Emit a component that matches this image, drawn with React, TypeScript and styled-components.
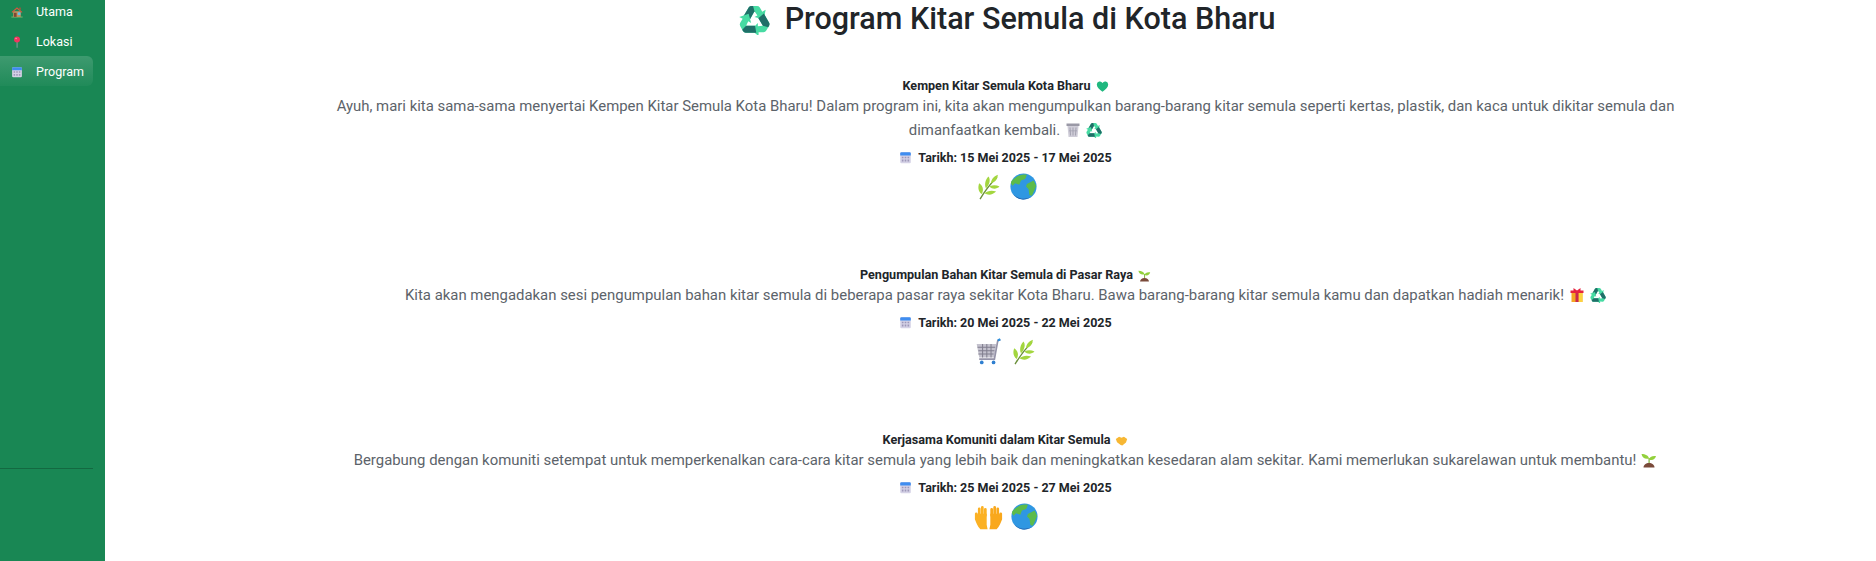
import React from 'react'
import styled, { createGlobalStyle } from 'styled-components'

type IconName =
  | 'house'
  | 'pin'
  | 'calendar'
  | 'recycle'
  | 'heart'
  | 'trash'
  | 'herb'
  | 'globe'
  | 'seedling'
  | 'gift'
  | 'cart'
  | 'handshake'
  | 'hands'

interface IconProps {
  name: IconName
  size: number
}

const RecycleArrow = ({ turn }: { turn: number }) => (
  <g transform={`rotate(${turn} 16 17.500)`}>
    <path
      d="M4.500 13 10 3.500Q11 2 13 2H18.500Q20.500 2 21.500 3.500L24 8 27.500 6 25.500 16 16 13.500 19 11.800 16 7.500 11.500 15.500z"
      fill="#47dba3"
    />
    <path d="M4.500 13 10 3.500Q11 2 13 2H14.500L16 7.500 11.500 15.500z" fill="#1f6f68" />
  </g>
)

const Icon = ({ name, size }: IconProps) => (
  <IconSvg width={size} height={size} viewBox="0 0 32 32">
    {name === 'house' && (
      <>
        <path d="M1 28h30v3H1z" fill="#6fae6a" />
        <path d="M6 14h20v15H6z" fill="#c9905f" />
        <path d="M1.500 16 16 3l14.500 13-2 2L16 7 3.500 18z" fill="#d9563f" />
        <path d="M22 4h4v7l-4-3.500z" fill="#a8533f" />
        <path d="M8 18h7v11H8z" fill="#7d4a34" />
        <path d="M18 17h7v7h-7z" fill="#5ec4ee" />
      </>
    )}
    {name === 'pin' && (
      <>
        <path d="M15 15h2.400v16H15z" fill="#9a9aa8" />
        <circle cx="16" cy="9" r="8" fill="#f0355f" />
        <circle cx="13.500" cy="6.500" r="2" fill="#ff9db4" />
      </>
    )}
    {name === 'calendar' && (
      <>
        <rect x="3" y="3" width="26" height="27" rx="3" fill="#d5d2e6" />
        <path d="M3 11V6a3 3 0 0 1 3-3h20a3 3 0 0 1 3 3v5z" fill="#3f8df0" />
        <path d="M7 14h4v4H7zm7 0h4v4h-4zm7 0h4v4h-4zM7 21h4v5H7zm7 0h4v5h-4zm7 0h4v5h-4z" fill="#9d97b8" />
      </>
    )}
    {name === 'recycle' && (
      <>
        <RecycleArrow turn={0} />
        <RecycleArrow turn={120} />
        <RecycleArrow turn={240} />
      </>
    )}
    {name === 'heart' && (
      <path d="M16 29C8 23 2 17.500 2 11a7.500 7.500 0 0 1 14-3.500A7.500 7.500 0 0 1 30 11c0 6.500-6 12-14 18z" fill="#1fb87f" />
    )}
    {name === 'trash' && (
      <>
        <path d="M3 3h26v5H3z" fill="#9a99a6" />
        <path d="M5 8h22l-2 22H7z" fill="#cfcdd8" />
        <path d="M9 11h2l1 16h-2zm6 0h2v16h-2zm6 0h2l-1 16h-2zM8 17h16v1.500H8z" fill="#a3a1b0" />
      </>
    )}
    {name === 'herb' && (
      <>
        <path d="M6 31C10 24 15 16 26 5" fill="none" stroke="#6a8f3a" strokeWidth="1.600" />
        <path d="M8 25C4 22 3 17 5 12c4 3 6 7 3 13zM13 18C11 14 12 8 16 4c3 4 1 10-3 14zM19 12c0-4 3-8 8-10 0 5-3 9-8 10zM11 24c4-3 9-4 14-2-4 4-9 5-14 2zM17 16c4-2 8-2 12 0-3 3-8 4-12 0z" fill="#a3d63f" />
      </>
    )}
    {name === 'globe' && (
      <>
        <circle cx="16" cy="16" r="15.500" fill="#2f97e2" />
        <path d="M6 6c4-4 10-5 14-4l-2 5-5 2-2 5-5-2-3 3-2-3c0-2 2-4 5-6zM20 13l8-4 3 6-2 5-3 7-3-1-1-7-3-3z" fill="#5cbb4a" />
        <path d="M25 28.500A15.500 15.500 0 0 1 3.500 25a18 18 0 0 0 21.500 3.500z" fill="#24549e" />
      </>
    )}
    {name === 'seedling' && (
      <>
        <path d="M15 12h2.400v12H15z" fill="#7fb23a" />
        <path d="M16 13C15 7 9 4 1 4c1 7 7 11 15 9zM16 15c1-5 6-8 14-7-1 6-7 10-14 7z" fill="#93d13c" />
        <path d="M5 31c0-5 5-9 11-9s11 4 11 9z" fill="#7a4a3a" />
      </>
    )}
    {name === 'gift' && (
      <>
        <path d="M5 10h22v20H5z" fill="#f4a623" />
        <path d="M19 10h8v20h-8z" fill="#fdd23f" />
        <path d="M13 10h6v20h-6z" fill="#c9274f" />
        <path d="M3 7h26v5H3zM9 2l7 5 7-5v5H9z" fill="#e6233f" />
      </>
    )}
    {name === 'cart' && (
      <>
        <path d="M2 7h23l-2 16H5z" fill="#c4c2ce" />
        <path d="M3 11h21M4 15h19M4 19h18M9 7v16M14 7v16M19 7v16" stroke="#807e8e" strokeWidth="1.200" />
        <path d="M30 2l-3 1-4 22H5" fill="none" stroke="#9593a8" strokeWidth="2" />
        <path d="M27 3l3-1.500" stroke="#2f8fdc" strokeWidth="2.500" />
        <circle cx="8" cy="29" r="2.200" fill="#2f7fd0" />
        <circle cx="22" cy="29" r="2.200" fill="#2f7fd0" />
      </>
    )}
    {name === 'handshake' && (
      <path d="M2 12l8-5 6 2 6-2 8 5-3 9-9 7-4-1-9-7z" fill="#f7b733" />
    )}
    {name === 'hands' && (
      <>
        <path d="M2.500 19V13M5.800 15V7.500M9.200 15V6M12.500 15V8" stroke="#fbb124" strokeWidth="3" strokeLinecap="round" />
        <path d="M1 18l3-5h10v12l1 5H7C4 27 2 23 1 18z" fill="#fbb124" />
        <path d="M29.500 19V13M26.200 15V7.500M22.800 15V6M19.500 15V8" stroke="#f9a81c" strokeWidth="3" strokeLinecap="round" />
        <path d="M31 18l-3-5H18v12l-1 5h8c3-3 5-7 6-12z" fill="#f9a81c" />
      </>
    )}
  </IconSvg>
)

const GlobalStyle = createGlobalStyle`
  html,
  body {
    margin: 0;
    background: #fff;
  }

  body {
    font-family: Roboto, 'Noto Sans', sans-serif;
    font-size: 16px;
    color: #212529;
    overflow: hidden;
  }
`

const IconSvg = styled.svg`
  display: inline-block;
  flex: none;
`

const Layout = styled.div`
  display: flex;
  height: 561px;
`

const Sidebar = styled.aside`
  display: flex;
  flex-direction: column;
  width: 105px;
  flex: none;
  background: #198754;
`

const NavList = styled.nav`
  flex: 1;
  display: flex;
  flex-direction: column;
  margin-top: -4px;
  padding-right: 12px;
`

const NavItem = styled.a<{ $active?: boolean }>`
  box-sizing: border-box;
  display: flex;
  align-items: center;
  gap: 13px;
  height: 30px;
  padding: 1px 0 0 11px;
  border-radius: 0 6px 6px 0;
  font-size: 12.500px;
  color: #fff;
  background: ${({ $active }) =>
    $active
      ? 'linear-gradient(180deg, rgba(255,255,255,0.16), rgba(255,255,255,0.03))'
      : 'transparent'};
`

const SidebarFooter = styled.div`
  height: 92px;
  margin-right: 12px;
  border-top: 1px solid rgba(0, 0, 0, 0.22);
`

const Main = styled.main`
  flex: 1;
  min-width: 0;
  padding-left: 30px;
  text-align: center;
`

const Title = styled.h1`
  display: flex;
  align-items: center;
  justify-content: center;
  gap: 15px;
  height: 38px;
  margin: 0 0 40px;
  padding-left: 3px;
  font-size: 30.500px;
  font-weight: 500;
  line-height: 38px;
  color: #212529;
`

const ProgramItem = styled.section`
  padding: 0 168px;
  margin-bottom: 67px;
`

const ProgramTitle = styled.h2`
  display: flex;
  align-items: center;
  justify-content: center;
  gap: 5px;
  margin: 0;
  height: 16px;
  font-size: 12.600px;
  font-weight: 700;
  line-height: 16px;
  color: #212529;
`

const Description = styled.p`
  margin: 0;
  font-size: 14.920px;
  line-height: 24px;
  color: #5c636a;
`

const InlineIcon = styled.span`
  display: inline-block;
  margin-left: 5px;
  vertical-align: -3px;
  line-height: 0;
`

const DateLine = styled.div`
  display: flex;
  align-items: center;
  justify-content: center;
  gap: 6px;
  height: 20px;
  margin-top: 5px;
  font-size: 12.500px;
  font-weight: 700;
  color: #212529;
`

const EmojiRow = styled.div`
  display: flex;
  align-items: center;
  justify-content: center;
  gap: 8px;
  height: 28px;
  margin-top: 5px;
`

interface Program {
  title: string
  titleIcon: IconName
  description: string
  descIcons: IconName[]
  date: string
  emojis: IconName[]
}

const programs: Program[] = [
  {
    title: 'Kempen Kitar Semula Kota Bharu',
    titleIcon: 'heart',
    description:
      'Ayuh, mari kita sama-sama menyertai Kempen Kitar Semula Kota Bharu! Dalam program ini, kita akan mengumpulkan barang-barang kitar semula seperti kertas, plastik, dan kaca untuk dikitar semula dan dimanfaatkan kembali.',
    descIcons: ['trash', 'recycle'],
    date: 'Tarikh: 15 Mei 2025 - 17 Mei 2025',
    emojis: ['herb', 'globe'],
  },
  {
    title: 'Pengumpulan Bahan Kitar Semula di Pasar Raya',
    titleIcon: 'seedling',
    description:
      'Kita akan mengadakan sesi pengumpulan bahan kitar semula di beberapa pasar raya sekitar Kota Bharu. Bawa barang-barang kitar semula kamu dan dapatkan hadiah menarik!',
    descIcons: ['gift', 'recycle'],
    date: 'Tarikh: 20 Mei 2025 - 22 Mei 2025',
    emojis: ['cart', 'herb'],
  },
  {
    title: 'Kerjasama Komuniti dalam Kitar Semula',
    titleIcon: 'handshake',
    description:
      'Bergabung dengan komuniti setempat untuk memperkenalkan cara-cara kitar semula yang lebih baik dan meningkatkan kesedaran alam sekitar. Kami memerlukan sukarelawan untuk membantu!',
    descIcons: ['seedling'],
    date: 'Tarikh: 25 Mei 2025 - 27 Mei 2025',
    emojis: ['hands', 'globe'],
  },
]

export default function App() {
  return (
    <>
      <GlobalStyle />
      <Layout>
        <Sidebar>
          <NavList>
            <NavItem>
              <Icon name="house" size={12} />
              Utama
            </NavItem>
            <NavItem>
              <Icon name="pin" size={12} />
              Lokasi
            </NavItem>
            <NavItem $active>
              <Icon name="calendar" size={12} />
              Program
            </NavItem>
          </NavList>
          <SidebarFooter />
        </Sidebar>
        <Main>
          <Title>
            <Icon name="recycle" size={31} />
            Program Kitar Semula di Kota Bharu
          </Title>
          {programs.map((program) => (
            <ProgramItem key={program.title}>
              <ProgramTitle>
                {program.title}
                <Icon name={program.titleIcon} size={13} />
              </ProgramTitle>
              <Description>
                {program.description}
                {program.descIcons.map((icon) => (
                  <InlineIcon key={icon}>
                    <Icon name={icon} size={16} />
                  </InlineIcon>
                ))}
              </Description>
              <DateLine>
                <Icon name="calendar" size={13} />
                {program.date}
              </DateLine>
              <EmojiRow>
                {program.emojis.map((icon) => (
                  <Icon key={icon} name={icon} size={icon === 'hands' ? 29 : 27} />
                ))}
              </EmojiRow>
            </ProgramItem>
          ))}
        </Main>
      </Layout>
    </>
  )
}
